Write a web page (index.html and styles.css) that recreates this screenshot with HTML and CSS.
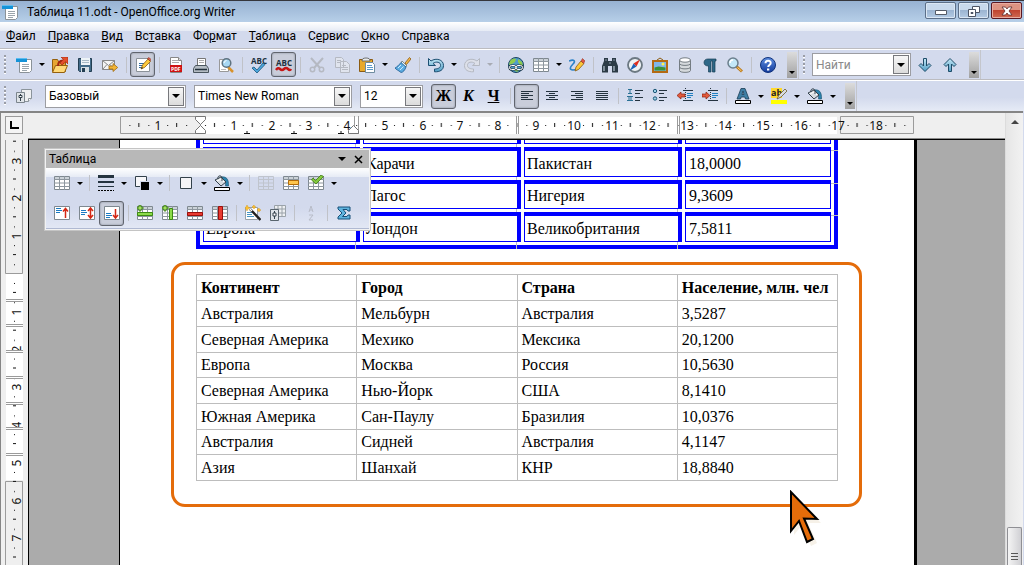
FILE: index.html
```html
<!DOCTYPE html>
<html lang="ru">
<head>
<meta charset="utf-8">
<title>Таблица 11.odt - OpenOffice.org Writer</title>
<link rel="stylesheet" href="styles.css">
</head>
<body>
<svg class="sprite" aria-hidden="true">
  <defs>
    <linearGradient id="g-blue" x1="0" y1="0" x2="0" y2="1"><stop offset="0" stop-color="#c5e8f6"/><stop offset="1" stop-color="#4f9cc4"/></linearGradient>
    <linearGradient id="g-help" x1="0" y1="0" x2="0" y2="1"><stop offset="0" stop-color="#5f8fe0"/><stop offset="1" stop-color="#123a9c"/></linearGradient>
  </defs>
  <symbol id="i-new" viewBox="0 0 16 16"><path d="M3.500 2.500h12v11l-2 2h-10z" fill="#fff" stroke="#8a9298"/><path d="M0 1h11v4H0z" fill="#1593d8"/><path d="M0 1h11v1H0z" fill="#5bbcf0"/><path d="M6 7.500h7M6 9.500h7M6 11.500h7M6 13.500h5" stroke="#9aa4ac"/></symbol>
  <symbol id="i-open" viewBox="0 0 16 16"><path d="M.5 14.500V2.500h5l1 2h7v10z" fill="#e7a633" stroke="#94600e"/><path d="M.5 15.500l3-7h12l-3 7z" fill="#ffd978" stroke="#94600e"/><path d="M6 9c0-4 2-5.500 5-5.500V6l-1 0" fill="none" stroke="#a32813" stroke-width="2"/><path d="M9 0h7v7l-2.300-2.200L10 8 8 6l3.300-3.600z" fill="#e2502c" stroke="#a32813" stroke-width=".7"/></symbol>
  <symbol id="i-save" viewBox="0 0 16 16"><path d="M1.500 1.500h13v13h-12l-1-1z" fill="#426b88" stroke="#233e52"/><path d="M4 1h9v7H4z" fill="#eef4f8"/><path d="M5 3.500h7M5 5.500h7" stroke="#a8bac6"/><path d="M4 10h8v5H4z" fill="#d4dde4"/><path d="M5 11h3v4H5z" fill="#233e52"/></symbol>
  <symbol id="i-mail" viewBox="0 0 16 16"><path d="M.5 3.500h12v9H.5z" fill="#f5f5f5" stroke="#888"/><path d="M.5 3.500l6 5 6-5M.5 12.500l4.500-5M12.500 12.500L8 7.500" fill="none" stroke="#888"/><path d="M7 9h4V6.500l4.700 4-4.700 4V12H7z" fill="#f2b535" stroke="#a06a10" stroke-width=".8"/></symbol>
  <symbol id="i-edit" viewBox="0 0 16 16"><path d="M1.500 1.500h13v13h-13z" fill="#fff" stroke="#8b9299"/><path d="M4 6.500h5M4 8.500h4M4 10.500h3" stroke="#2f6aa0"/><path d="M6 12l1.500-4L13 2l2.500 2.500-6 6z" fill="#fbc83a" stroke="#8c5c12" stroke-width=".8"/><path d="M12.500 1.500L14 .500 16 2.500 15 4z" fill="#e0604c" stroke="#8c2d1c" stroke-width=".6"/><path d="M6 12l1-2 1 1z" fill="#222"/></symbol>
  <symbol id="i-print" viewBox="0 0 16 16"><path d="M4.500 1.500h8v7h-8z" fill="#fff" stroke="#777"/><path d="M6 3.500h5M6 5.500h5" stroke="#aaa"/><path d="M2.500 8.500h11l2 3v4H.500v-4z" fill="#b4bcc3" stroke="#4a565f"/><path d="M2 12.500h12" stroke="#23313c" stroke-width="1.500"/></symbol>
  <symbol id="i-preview" viewBox="0 0 16 16"><path d="M1.500 2.500h9v12h-9z" fill="#fff" stroke="#999"/><path d="M3 12.500h5" stroke="#bbb"/><path d="M10 10l5 5" stroke="#d8922c" stroke-width="2.500"/><circle cx="8.500" cy="6" r="4.300" fill="#a8d8f2" stroke="#5f7380" stroke-width="1.500"/><path d="M6 6a3 3 0 0 1 2.500-2.500" stroke="#fff" fill="none"/></symbol>
  <symbol id="i-cut" viewBox="0 0 16 16"><path d="M2 1l9 10M14 1L5 11" stroke="#b5b9c2" stroke-width="2"/><circle cx="3.500" cy="12.500" r="2.200" fill="none" stroke="#b5b9c2" stroke-width="1.500"/><circle cx="12.500" cy="12.500" r="2.200" fill="none" stroke="#b5b9c2" stroke-width="1.500"/></symbol>
  <symbol id="i-copy" viewBox="0 0 16 16"><path d="M1.500.500h6l2 2v8h-8zM6.500 4.500h6l3 3v8h-9z" fill="#e0e4ee" stroke="#b5b9c2"/><path d="M3 3.500h4M3 5.500h3M8 8.500h4M8 10.500h6M8 12.500h6" stroke="#b5b9c2"/></symbol>
  <symbol id="i-paste" viewBox="0 0 16 16"><path d="M.500 2.500h13v12h-13z" fill="#e8a92c" stroke="#8c5c12"/><path d="M3 4c0-2 1-3 4-3s4 1 4 3z" fill="#e7eaec" stroke="#555" stroke-width=".8"/><path d="M6.500 5.500h7l2 2v8h-9z" fill="#fff" stroke="#6f8ca0"/><path d="M8 8.500h5M8 10.500h6M8 12.500h6" stroke="#5a9acb"/></symbol>
  <symbol id="i-brush" viewBox="0 0 16 16"><path d="M10 6l4.500-5.500L16 2l-4.500 5.500z" fill="#f3b548" stroke="#8c5c12" stroke-width=".8"/><path d="M7 4l5 5-2 1-4-4z" fill="#f2f5f7" stroke="#566" stroke-width=".7"/><path d="M6 5.500L11 10c-1 3-3 5.500-5 5.500C3 13 1.500 13 0 11c2-1 4-3 6-5.500z" fill="#5cabe0" stroke="#1d5c92" stroke-width=".8"/><path d="M3 11l3-3M5 13l3.500-3.500" stroke="#cdeafb"/></symbol>
  <symbol id="i-undo" viewBox="0 0 16 16"><path d="M.500 1.500v7h7L5 6.500C8 4 13 5 12.500 8.500c0 2.500-3 3.500-6 3.500v2.800C12 15 15.500 13 15.500 8.500 15.500 2.500 8 .500 3 4z" fill="url(#g-blue)" stroke="#1d4f72"/></symbol>
  <symbol id="i-redo" viewBox="0 0 16 16"><path d="M15.500 1.500v7h-7L11 6.500C8 4 3 5 3.500 8.500c0 2.500 3 3.500 6 3.500v2.800C4 15 .500 13 .500 8.500.500 2.500 8 .500 13 4z" fill="#dde0e9" stroke="#b5b9c2"/></symbol>
  <symbol id="i-link" viewBox="0 0 16 16"><circle cx="8" cy="8" r="7.500" fill="#4f9ccc" stroke="#1c4460"/><path d="M2 4c2-3 5-3 6-2L7 5 4 7 1 8zM10 2l4 3 1 4-3-1-2-3zM4 12l5-1 2 2-2 2z" fill="#8fcb4f"/><rect x="1.500" y="8.500" width="6.500" height="4" rx="2" fill="none" stroke="#20313f" stroke-width="2.200"/><rect x="8" y="8.500" width="6.500" height="4" rx="2" fill="none" stroke="#20313f" stroke-width="2.200"/><rect x="1.500" y="8.500" width="6.500" height="4" rx="2" fill="none" stroke="#fff"/><rect x="8" y="8.500" width="6.500" height="4" rx="2" fill="none" stroke="#fff"/></symbol>
  <symbol id="i-grid" viewBox="0 0 16 16"><path d="M.500 1.500h15v13H.500z" fill="#fff" stroke="#7e8890"/><path d="M1 2h14v2H1z" fill="#cbd2d8"/><path d="M0 4.500h16M0 8h16M0 11.500h16M5.500 1v14M10.500 1v14" stroke="#8d969e" fill="none"/></symbol>
  <symbol id="i-griddim" viewBox="0 0 16 16"><path d="M.500 1.500h15v13H.500zM0 4.500h16M0 8h16M0 11.500h16M5.500 1v14M10.500 1v14" stroke="#bfc4cd" fill="none"/></symbol>
  <symbol id="i-draw" viewBox="0 0 16 16"><path d="M0 4c5-2 7 0 4 3s-4 6 0 6 6-2 6-2" fill="none" stroke="#2b82c8" stroke-width="1.600"/><path d="M6 14l1-4 5-6 3 2.500-5.500 6z" fill="#fbc83a" stroke="#8c5c12" stroke-width=".8"/><path d="M12 4l1.500-2.500L16 4l-1.500 2.500z" fill="#dd5644" stroke="#8c2d1c" stroke-width=".5"/></symbol>
  <symbol id="i-find" viewBox="0 0 16 16"><path d="M2 1h4v3h4V1h4v3l2 5v6.500h-6V9H6v6.500H0V9l2-5z" fill="#2c3b46"/><path d="M2 9v5M12 9v5" stroke="#9aabb6" stroke-width="1.500"/><path d="M3 3h2M11 3h2M7 6h2" stroke="#8596a3"/></symbol>
  <symbol id="i-nav" viewBox="0 0 16 16"><circle cx="8" cy="8" r="7" fill="#eef3f6" stroke="#6c7982" stroke-width="1.800"/><path d="M13 2.500L9.500 9.500 6.500 6.500z" fill="#df2f20"/><path d="M3 13.500l3.500-7 3 3z" fill="#1c63b8"/></symbol>
  <symbol id="i-pic" viewBox="0 0 16 16"><path d="M5 3l3-2 3 2" fill="none" stroke="#8c5c12"/><path d="M1 4h14v11H1z" fill="#80b6e8" stroke="#b46a12" stroke-width="2"/><path d="M2.500 13.500v-3l4-1 7 1v3z" fill="#3b9136"/><circle cx="11" cy="7" r="1.500" fill="#fff34f"/></symbol>
  <symbol id="i-db" viewBox="0 0 16 16"><path d="M2.500 3v10.500c0 2.500 11 2.500 11 0V3" fill="#d5d9dc" stroke="#747c82"/><ellipse cx="8" cy="3" rx="5.500" ry="2.200" fill="#fff" stroke="#747c82"/><path d="M2.500 6.500c0 2.500 11 2.500 11 0M2.500 10c0 2.500 11 2.500 11 0" fill="none" stroke="#747c82"/></symbol>
  <symbol id="i-para" viewBox="0 0 16 16"><path d="M2 5.500C2 3 4 2 6 2h8v2h-1v11h-2.500V4H9v11H6.500V9C4 9 2 8 2 5.500z" fill="#2d6787" stroke="#163c54" stroke-width=".7"/></symbol>
  <symbol id="i-zoom" viewBox="0 0 16 16"><path d="M9.500 9.500l5.500 5" stroke="#bb7a20" stroke-width="3"/><path d="M10.500 10.500l4 3.500" stroke="#ffd978"/><circle cx="6" cy="6" r="5" fill="#c4e8f8" stroke="#6c7f8c" stroke-width="1.500"/><path d="M3 6a3 3 0 0 1 3-3" stroke="#fff" fill="none" stroke-width="1.500"/></symbol>
  <symbol id="i-help" viewBox="0 0 16 16"><circle cx="8" cy="8" r="7.500" fill="url(#g-help)" stroke="#10327c"/><path d="M5.500 6.200C5.500 3 10.700 3 10.700 6c0 2-2.500 2-2.500 4" fill="none" stroke="#fff" stroke-width="2"/><path d="M7 11.500h2.300v2H7z" fill="#fff"/></symbol>
  <symbol id="i-down" viewBox="0 0 16 16"><path d="M6.500 1.500h3v7.500l2.500-2.500 2 2-6 6-6-6 2-2L6.500 9z" fill="url(#g-blue)" stroke="#1e4c68"/></symbol>
  <symbol id="i-up" viewBox="0 0 16 16"><path d="M6.500 14.500h3V7L12 9.500l2-2-6-6-6 6 2 2L6.500 7z" fill="url(#g-blue)" stroke="#1e4c68"/></symbol>
  <symbol id="i-styles" viewBox="0 0 16 16"><path d="M5.500 1.500h10v9l-3 3h-7z" fill="#eef0f2" stroke="#8b949b"/><path d="M12.500 13.500v-3h3" fill="#fff" stroke="#8b949b"/><path d="M.500 4.500h8v10h-8z" fill="#dfe4e8" stroke="#7b858d"/><path d="M4.500 6v7" stroke="#33414b"/><path d="M3 7.500h3v2H3z" fill="#fff" stroke="#33414b"/></symbol>
  <symbol id="i-left" viewBox="0 0 16 16"><path d="M2 3.500h12M2 5.500h8M2 7.500h12M2 9.500h7M2 11.500h12" stroke="#24333f"/></symbol>
  <symbol id="i-center" viewBox="0 0 16 16"><path d="M2 3.500h12M5 5.500h6M2 7.500h12M5 9.500h6M2 11.500h12" stroke="#24333f"/></symbol>
  <symbol id="i-right" viewBox="0 0 16 16"><path d="M2 3.500h12M6 5.500h8M2 7.500h12M7 9.500h7M2 11.500h12" stroke="#24333f"/></symbol>
  <symbol id="i-just" viewBox="0 0 16 16"><path d="M2 3.500h12M2 5.500h12M2 7.500h12M2 9.500h12M2 11.500h12" stroke="#24333f"/></symbol>
  <symbol id="i-num" viewBox="0 0 16 16"><path d="M1 1.500h4M3 1v5M1 5.500h4M0 8.500h6M0 12.500h6M2 8v5M4 8v5" stroke="#2a7194"/><path d="M8 2.500h8M8 5.500h5M8 9.500h8M8 12.500h5" stroke="#24333f"/></symbol>
  <symbol id="i-bul" viewBox="0 0 16 16"><circle cx="3" cy="3" r="1.700" fill="#9bd0e8" stroke="#1c5777"/><circle cx="3" cy="10.500" r="1.700" fill="#9bd0e8" stroke="#1c5777"/><path d="M7 2.500h8M7 5.500h5M7 9.500h8M7 12.500h5" stroke="#24333f"/></symbol>
  <symbol id="i-outdent" viewBox="0 0 16 16"><path d="M8.500 0v14" stroke="#24333f" stroke-dasharray="1 1"/><path d="M6 2.500h10M6 12.500h10" stroke="#24333f"/><path d="M10 5.500h6M10 7.500h6M10 9.500h4" stroke="#1f7fc0"/><path d="M0 7.500l4-3.500v2h4v3H4v2z" fill="#e25a3c" stroke="#8c1f10" stroke-width=".7"/></symbol>
  <symbol id="i-indent" viewBox="0 0 16 16"><path d="M8.500 0v14" stroke="#24333f" stroke-dasharray="1 1"/><path d="M6 2.500h10M6 12.500h10" stroke="#24333f"/><path d="M10 5.500h6M10 7.500h6M10 9.500h4" stroke="#1f7fc0"/><path d="M8 7.500L4 4v2H0v3h4v2z" fill="#e25a3c" stroke="#8c1f10" stroke-width=".7"/></symbol>
  <symbol id="i-color" viewBox="0 0 16 16"><path d="M2 11L6 .500h4L14 11h-3.500l-.7-2H6.200l-.700 2zM7 6.500h2L8 3z" fill="#3f7fa5" stroke="#1a3d55" stroke-width=".8" fill-rule="evenodd"/><path d="M.500 12.500h15v3H.500z" fill="#fff" stroke="#000"/></symbol>
  <symbol id="i-fill" viewBox="0 0 16 16"><path d="M7 2c5-1 8 2 7.500 9h-3C12 8 11 6 9 4z" fill="#2b82ac" stroke="#1c506c" stroke-width=".6"/><path d="M1 5l6-3 5 5-5 4z" fill="#d7dce0" stroke="#33414b"/><path d="M3 6l4-2 3 3" fill="none" stroke="#fff"/><path d="M4 4c-1-4 4-4 4-1l0 3" fill="none" stroke="#33414b"/><path d="M.500 12.500h15v3H.500z" fill="#fff" stroke="#000"/></symbol>
  <symbol id="i-lines" viewBox="0 0 16 16"><path d="M0 1.500h16" stroke="#24333f" stroke-width="3"/><path d="M0 7h16" stroke="#24333f" stroke-width="2"/><path d="M0 11.500h16" stroke="#24333f"/><path d="M0 15.500h16" stroke="#000" stroke-dasharray="2 1"/></symbol>
  <symbol id="i-lcolor" viewBox="0 0 16 16"><path d="M1.500 1.500h11v10h-11z" fill="#f7f7f9" stroke="#33414b"/><path d="M6 6h10v10H6z" fill="#d3daed"/><path d="M7 7h8v8H7z" fill="#000"/></symbol>
  <symbol id="i-box" viewBox="0 0 16 16"><path d="M2.500 2.500h11v11h-11z" fill="#f4f4f7" stroke="#33414b"/></symbol>
  <symbol id="i-merge" viewBox="0 0 16 16"><use href="#i-grid"/><path d="M5.500 5.500h10v4h-10z" fill="#ffc64d" stroke="#b36c09"/></symbol>
  <symbol id="i-opt" viewBox="0 0 16 16"><use href="#i-grid"/><path d="M5 3l2.500 2.500L13 0l2.500 1.500L8 9 3.500 5z" fill="#84c83e" stroke="#3d7a13" stroke-width=".8"/></symbol>
  <symbol id="i-top" viewBox="0 0 16 16"><path d="M.500 1.500h15v13H.500z" fill="#fff" stroke="#7e8890"/><path d="M2 3.500h5M2 5.500h6M2 7.500h4" stroke="#1b7ac2"/><path d="M11.500 4v9M9 6.500l2.500-3 2.500 3" stroke="#d32613" fill="none" stroke-width="1.500"/></symbol>
  <symbol id="i-mid" viewBox="0 0 16 16"><path d="M.500 1.500h15v13H.500z" fill="#fff" stroke="#7e8890"/><path d="M2 5.500h5M2 7.500h6M2 9.500h4" stroke="#1b7ac2"/><path d="M11.500 3.500v9M9 6l2.500-3L14 6M9 10l2.500 3 2.500-3" stroke="#d32613" fill="none" stroke-width="1.500"/></symbol>
  <symbol id="i-bot" viewBox="0 0 16 16"><path d="M.500 1.500h15v13H.500z" fill="#fff" stroke="#7e8890"/><path d="M2 8.500h5M2 10.500h6M2 12.500h4" stroke="#1b7ac2"/><path d="M11.500 4v9M9 10l2.500 3 2.500-3" stroke="#d32613" fill="none" stroke-width="1.500"/></symbol>
  <symbol id="i-addrow" viewBox="0 0 16 16"><use href="#i-grid"/><path d="M.500 7.500h15v3H.500z" fill="#8cdb4a" stroke="#3d8a13"/><path d="M2 0h2v2h2v2H4v2H2V4H0V2h2z" fill="#a4e060" stroke="#2f6e10" stroke-width=".8"/></symbol>
  <symbol id="i-addcol" viewBox="0 0 16 16"><use href="#i-grid"/><path d="M7.500 3.500h3v11h-3z" fill="#8cdb4a" stroke="#3d8a13"/><path d="M2 0h2v2h2v2H4v2H2V4H0V2h2z" fill="#a4e060" stroke="#2f6e10" stroke-width=".8"/></symbol>
  <symbol id="i-delrow" viewBox="0 0 16 16"><use href="#i-grid"/><path d="M.500 7.500h15v3H.500z" fill="#e83a30" stroke="#9c0e0a"/></symbol>
  <symbol id="i-delcol" viewBox="0 0 16 16"><use href="#i-grid"/><path d="M6.500 1.500h4v13h-4z" fill="#e83a30" stroke="#9c0e0a"/></symbol>
  <symbol id="i-wand" viewBox="0 0 16 16"><path d="M.500 2.500h12v12H.500z" fill="#fff" stroke="#98a1a8"/><path d="M2 7.500h5M2 9.500h5M2 11.500h7" stroke="#4494c4"/><path d="M5 4l10.500 11" stroke="#222" stroke-width="2.500"/><path d="M5 4l2 2" stroke="#fff" stroke-width="1.500"/><path d="M2 0l1 2 2 1-2 1-1 2-1-2-1-1 1-1zM9 0l.7 1.500L11 2l-1.300.7L9 4l-.7-1.300L7 2zM14 3l.7 1.500L16 5l-1.300.7L14 7l-.7-1.300L12 5z" fill="#ffc22b" stroke="#d08e12" stroke-width=".4"/></symbol>
  <symbol id="i-prop" viewBox="0 0 16 16"><path d="M4.500.500h11v11h-11zM4 4h12M4 8h12M8 0v12M12 0v12" fill="#eef0f2" stroke="#9aa2a9"/><path d="M.500 4.500h8v11h-8z" fill="#dfe4e8" stroke="#59656e"/><path d="M4.500 6v8" stroke="#33414b"/><path d="M3 8h3v3H3z" fill="#fff" stroke="#33414b"/></symbol>
  <symbol id="i-sort" viewBox="0 0 16 16"><path d="M6 7l2-6 2 6M6.500 5h3M6 10h4l-4 5h4" fill="none" stroke="#b8bcc8"/></symbol>
  <symbol id="i-sum" viewBox="0 0 16 16"><path d="M2 2h12v4h-2l-1-1.500H7L10 8l-3.500 3.500H11l1-1.500h2v4H2v-2l4-4-4-4z" fill="#5fb4df" stroke="#164f78"/></symbol>
</svg>

<header class="titlebar">
  <svg class="icon"><use href="#i-new"/></svg>
  <h1 class="title">Таблица 11.odt - OpenOffice.org Writer</h1>
  <div class="win-buttons">
    <button class="win" aria-label="Свернуть"><svg viewBox="0 0 14 14"><path d="M1.500 6.500h11v4h-11z" fill="#fff" stroke="#555b66"/></svg></button>
    <button class="win" aria-label="Восстановить"><svg viewBox="0 0 14 14"><path d="M5.500 2.500h7v6h-7z" fill="#fff" stroke="#4c5464"/><path d="M1.500 5.500h7v7h-7z" fill="#fff" stroke="#4c5464"/><path d="M4 8.500h2v1H4z" fill="none" stroke="#4c5464"/></svg></button>
    <button class="win win-close" aria-label="Закрыть"><svg viewBox="0 0 14 14"><path d="M2 3h3.500L7 5l1.500-2H12L9 7l3 4H8.500L7 9l-1.500 2H2l3-4z" fill="#fff" stroke="#5c2a2a" stroke-width=".8"/></svg></button>
  </div>
</header>

<nav class="menubar">
  <a href="#"><u>Ф</u>айл</a><a href="#"><u>П</u>равка</a><a href="#"><u>В</u>ид</a><a href="#">Вс<u>т</u>авка</a><a href="#">Фо<u>р</u>мат</a><a href="#"><u>Т</u>аблица</a><a href="#">С<u>е</u>рвис</a><a href="#"><u>О</u>кно</a><a href="#">Спр<u>а</u>вка</a>
</nav>

<div class="toolbar-row">
  <div class="toolbar" role="toolbar" aria-label="Стандартная">
    <i class="grip"></i>
    <button class="tb" aria-label="Создать"><svg class="icon"><use href="#i-new"/></svg></button><button class="drop" aria-label="Варианты создания"></button>
    <button class="tb" aria-label="Открыть"><svg class="icon"><use href="#i-open"/></svg></button>
    <button class="tb" aria-label="Сохранить"><svg class="icon"><use href="#i-save"/></svg></button>
    <button class="tb" aria-label="Отправить"><svg class="icon"><use href="#i-mail"/></svg></button>
    <i class="sep"></i>
    <button class="tb on" aria-label="Правка файла"><svg class="icon"><use href="#i-edit"/></svg></button>
    <i class="sep"></i>
    <button class="tb" aria-label="Экспорт в PDF"><svg class="icon" viewBox="0 0 16 16"><path d="M2.500.500h8l3 3v12h-11z" fill="#fff" stroke="#888"/><path d="M4 3.500h6M4 5.500h7" stroke="#aaa"/><path d="M10.500.500v3h3" fill="#ddd" stroke="#888"/><path d="M2 8h12v7H2z" fill="#cf1313"/><text x="3" y="14" font-size="5" fill="#fff" class="tiny">PDF</text></svg></button>
    <button class="tb" aria-label="Печать"><svg class="icon"><use href="#i-print"/></svg></button>
    <button class="tb" aria-label="Предварительный просмотр"><svg class="icon"><use href="#i-preview"/></svg></button>
    <i class="sep"></i>
    <button class="tb" aria-label="Проверка орфографии"><svg class="icon wide" viewBox="0 0 18 16"><text x="1" y="7" font-size="8" fill="#20313f" class="tiny">ABC</text><path d="M4 10l3 3 6-7 2 1.500-8 8.500-5-5z" fill="#4ca6dc" stroke="#1b567c" stroke-width=".8"/></svg></button>
    <button class="tb on" aria-label="Автопроверка"><svg class="icon wide" viewBox="0 0 18 16"><text x="1" y="9" font-size="8" fill="#20313f" class="tiny">ABC</text><path d="M1 13q2-3 4-1t4 0 4 0 3 0" fill="none" stroke="#c51515" stroke-width="2.500"/></svg></button>
    <i class="sep"></i>
    <button class="tb" aria-label="Вырезать"><svg class="icon"><use href="#i-cut"/></svg></button>
    <button class="tb" aria-label="Копировать"><svg class="icon"><use href="#i-copy"/></svg></button>
    <button class="tb" aria-label="Вставить"><svg class="icon"><use href="#i-paste"/></svg></button><button class="drop" aria-label="Варианты вставки"></button>
    <button class="tb" aria-label="Копировать формат"><svg class="icon"><use href="#i-brush"/></svg></button>
    <i class="sep"></i>
    <button class="tb" aria-label="Отменить"><svg class="icon"><use href="#i-undo"/></svg></button><button class="drop" aria-label="Список отмены"></button>
    <button class="tb" aria-label="Вернуть"><svg class="icon"><use href="#i-redo"/></svg></button><button class="drop dim" aria-label="Список возврата"></button>
    <i class="sep"></i>
    <button class="tb" aria-label="Гиперссылка"><svg class="icon"><use href="#i-link"/></svg></button>
    <button class="tb" aria-label="Таблица"><svg class="icon"><use href="#i-grid"/></svg></button><button class="drop" aria-label="Размер таблицы"></button>
    <button class="tb" aria-label="Рисование"><svg class="icon"><use href="#i-draw"/></svg></button>
    <i class="sep"></i>
    <button class="tb" aria-label="Найти и заменить"><svg class="icon"><use href="#i-find"/></svg></button>
    <button class="tb" aria-label="Навигатор"><svg class="icon"><use href="#i-nav"/></svg></button>
    <button class="tb" aria-label="Галерея"><svg class="icon"><use href="#i-pic"/></svg></button>
    <button class="tb" aria-label="Источники данных"><svg class="icon"><use href="#i-db"/></svg></button>
    <button class="tb" aria-label="Непечатаемые символы"><svg class="icon"><use href="#i-para"/></svg></button>
    <button class="tb" aria-label="Масштаб"><svg class="icon"><use href="#i-zoom"/></svg></button>
    <i class="sep"></i>
    <button class="tb" aria-label="Справка"><svg class="icon"><use href="#i-help"/></svg></button>
    <button class="more" aria-label="Настройка панели"></button>
  </div>
  <div class="toolbar" role="toolbar" aria-label="Поиск">
    <i class="grip"></i>
    <div class="combo find"><input type="text" placeholder="Найти" aria-label="Найти"><button class="combo-btn" aria-label="История поиска"></button></div>
    <button class="tb" aria-label="Найти далее"><svg class="icon"><use href="#i-down"/></svg></button>
    <button class="tb" aria-label="Найти ранее"><svg class="icon"><use href="#i-up"/></svg></button>
    <button class="more" aria-label="Настройка поиска"></button>
  </div>
</div>

<div class="toolbar-row format-row">
  <div class="toolbar" role="toolbar" aria-label="Форматирование">
    <i class="grip"></i>
    <button class="tb" aria-label="Стили"><svg class="icon"><use href="#i-styles"/></svg></button>
    <div class="combo style"><select aria-label="Стиль"><option>Базовый</option></select><span class="combo-btn"></span></div>
    <div class="combo face"><select aria-label="Шрифт"><option>Times New Roman</option></select><span class="combo-btn"></span></div>
    <div class="combo size"><select aria-label="Кегль"><option>12</option></select><span class="combo-btn"></span></div>
    <button class="tb on letter" aria-label="Жирный">Ж</button>
    <button class="tb letter italic" aria-label="Курсив">К</button>
    <button class="tb letter under" aria-label="Подчёркнутый">Ч</button>
    <i class="sep"></i>
    <button class="tb on" aria-label="По левому краю"><svg class="icon"><use href="#i-left"/></svg></button>
    <button class="tb" aria-label="По центру"><svg class="icon"><use href="#i-center"/></svg></button>
    <button class="tb" aria-label="По правому краю"><svg class="icon"><use href="#i-right"/></svg></button>
    <button class="tb" aria-label="По ширине"><svg class="icon"><use href="#i-just"/></svg></button>
    <i class="sep"></i>
    <button class="tb" aria-label="Нумерация"><svg class="icon"><use href="#i-num"/></svg></button>
    <button class="tb" aria-label="Маркеры"><svg class="icon"><use href="#i-bul"/></svg></button>
    <button class="tb" aria-label="Уменьшить отступ"><svg class="icon"><use href="#i-outdent"/></svg></button>
    <button class="tb" aria-label="Увеличить отступ"><svg class="icon"><use href="#i-indent"/></svg></button>
    <i class="sep"></i>
    <button class="tb" aria-label="Цвет шрифта"><svg class="icon"><use href="#i-color"/></svg></button><button class="drop" aria-label="Выбор цвета шрифта"></button>
    <button class="tb" aria-label="Выделение цветом"><svg class="icon" viewBox="0 0 16 16"><path d="M0 0h11v10H0z" fill="#ffd92e"/><text x="0" y="8" font-size="9" fill="#222" class="tiny">ab</text><path d="M6 11l2-4 6-6 2 2-6 6z" fill="#d8dde0" stroke="#6c5a28" stroke-width=".8"/><path d="M0 12h16v4H0z" fill="#ff0"/></svg></button><button class="drop" aria-label="Выбор цвета выделения"></button>
    <button class="tb" aria-label="Цвет фона"><svg class="icon"><use href="#i-fill"/></svg></button><button class="drop" aria-label="Выбор цвета фона"></button>
    <button class="more" aria-label="Настройка панели"></button>
  </div>
</div>

<main class="workspace">
  <div class="corner"><button class="tab-kind" aria-label="Тип табуляции"></button></div>
  <svg class="hruler" aria-hidden="true">
    <defs>
      <pattern id="hticks" x="196" y="116" width="37.800" height="18" patternUnits="userSpaceOnUse"><path d="M9 9h1v1H9zM28 9h1v1h-1zM18 7h1v4h-1z" fill="#111"/></pattern>
    </defs>
    <g transform="translate(-28 -113)">
      <path d="M201 117h636v17H201z" fill="#fff"/>
      <path d="M120.500 116.500h80v17h-80zM840.500 116.500h73v17h-73z" fill="#efefef" stroke="#9b9b9b"/>
      <path d="M126 116h784v18H126z" fill="url(#hticks)"/>
      <g class="ruler-num">
        <text x="158" y="130">1</text><text x="234" y="130">1</text><text x="272" y="130">2</text><text x="309" y="130">3</text><text x="347" y="130">4</text><text x="385" y="130">5</text><text x="423" y="130">6</text><text x="460" y="130">7</text><text x="498" y="130">8</text><text x="536" y="130">9</text><text x="574" y="130">10</text><text x="612" y="130">11</text><text x="649" y="130">12</text><text x="687" y="130">13</text><text x="725" y="130">14</text><text x="763" y="130">15</text><text x="801" y="130">16</text><text x="838" y="130">17</text><text x="876" y="130">18</text>
      </g>
      <path d="M354.500 116v18M358.500 116v18M516.500 116v18M518.500 116v18M677.500 116v18M679.500 116v18" stroke="#9b9b9b"/>
      <path d="M244 133.500h6M247 131v3M291 133.500h6M294 131v3M338 133.500h6M341 131v3" stroke="#111"/>
      <path d="M195.500 116.500h10v3l-5 5-5-5zM195.500 133.500h10v-3l-5-5-5 5zM348.500 133.500h10v-3l-5-5-5 5z" fill="#fff" stroke="#777"/>
    </g>
  </svg>
  <svg class="vruler" aria-hidden="true">
    <defs>
      <pattern id="vticks" x="0" y="274" width="18" height="37.800" patternUnits="userSpaceOnUse"><path d="M9 9h1v1H9zM9 28h1v1H9zM8 18h3v1H8z" fill="#111"/></pattern>
    </defs>
    <g transform="translate(0 -140)">
      <path d="M1 274h17v206H1z" fill="#fff"/>
      <path d="M.500 139v134.500h17V139M.500 700V481.500h17V700" fill="#efefef" stroke="#9b9b9b"/>
      <path d="M0 140h18v560H0z" fill="url(#vticks)"/>
      <g class="ruler-num">
        <text transform="translate(16 161) rotate(-90)">3</text><text transform="translate(16 198) rotate(-90)">2</text><text transform="translate(16 236) rotate(-90)">1</text><text transform="translate(16 312) rotate(-90)">1</text><text transform="translate(16 349) rotate(-90)">2</text><text transform="translate(16 387) rotate(-90)">3</text><text transform="translate(16 425) rotate(-90)">4</text><text transform="translate(16 463) rotate(-90)">5</text><text transform="translate(16 501) rotate(-90)">6</text><text transform="translate(16 538) rotate(-90)">7</text>
      </g>
      <path d="M1 300.500h17M1 325.500h17M1 351.500h17M1 377.500h17M1 403.500h17M1 428.500h17M1 454.500h17" stroke="#9b9b9b" stroke-width="3"/>
      <path d="M1 300.500h17M1 325.500h17M1 351.500h17M1 377.500h17M1 403.500h17M1 428.500h17M1 454.500h17" stroke="#fff"/>
    </g>
  </svg>

  <div class="canvas">
    <article class="page">
      <table class="ringed">
        <colgroup><col class="c1"><col class="c2"><col class="c2"><col class="c3"></colgroup>
        <tbody>
          <tr><td></td><td></td><td></td><td></td></tr>
          <tr><td></td><td>Карачи</td><td>Пакистан</td><td>18,0000</td></tr>
          <tr><td></td><td>Лагос</td><td>Нигерия</td><td>9,3609</td></tr>
          <tr><td>Европа</td><td>Лондон</td><td>Великобритания</td><td>7,5811</td></tr>
        </tbody>
      </table>
      <section class="callout">
        <table class="plain">
          <thead><tr><th>Континент</th><th>Город</th><th>Страна</th><th>Население, млн. чел</th></tr></thead>
          <tbody>
            <tr><td>Австралия</td><td>Мельбурн</td><td>Австралия</td><td>3,5287</td></tr>
            <tr><td>Северная Америка</td><td>Мехико</td><td>Мексика</td><td>20,1200</td></tr>
            <tr><td>Европа</td><td>Москва</td><td>Россия</td><td>10,5630</td></tr>
            <tr><td>Северная Америка</td><td>Нью-Йорк</td><td>США</td><td>8,1410</td></tr>
            <tr><td>Южная Америка</td><td>Сан-Паулу</td><td>Бразилия</td><td>10,0376</td></tr>
            <tr><td>Австралия</td><td>Сидней</td><td>Австралия</td><td>4,1147</td></tr>
            <tr><td>Азия</td><td>Шанхай</td><td>КНР</td><td>18,8840</td></tr>
          </tbody>
        </table>
        <svg class="pointer" viewBox="0 0 34 58" aria-hidden="true">
          <path d="M5 5v40l8-10 9 21 6-3-9-20h13z" fill="#f6f1e8"/>
          <path d="M2 2v39l8-10 8 21 6-3-9-20.500 13 .500z" fill="#e46c0a" stroke="#000" stroke-width="2"/>
        </svg>
      </section>
    </article>

    <aside class="palette" aria-label="Таблица">
      <div class="palette-head"><span class="palette-title">Таблица</span><button class="drop" aria-label="Меню панели"></button><button class="close" aria-label="Закрыть панель"><svg viewBox="0 0 9 9"><path d="M1 1l7 7M8 1L1 8" stroke="#000" stroke-width="1.500"/></svg></button></div>
      <div class="palette-body">
        <div class="palette-row">
          <button class="tb" aria-label="Вставить таблицу"><svg class="icon"><use href="#i-grid"/></svg></button><button class="drop" aria-label="Размер"></button>
          <i class="sep"></i>
          <button class="tb" aria-label="Стиль линии"><svg class="icon"><use href="#i-lines"/></svg></button><button class="drop" aria-label="Выбор стиля линии"></button>
          <button class="tb" aria-label="Цвет линии"><svg class="icon"><use href="#i-lcolor"/></svg></button><button class="drop" aria-label="Выбор цвета линии"></button>
          <i class="sep"></i>
          <button class="tb" aria-label="Обрамление"><svg class="icon"><use href="#i-box"/></svg></button><button class="drop" aria-label="Выбор обрамления"></button>
          <button class="tb" aria-label="Цвет фона ячейки"><svg class="icon"><use href="#i-fill"/></svg></button><button class="drop" aria-label="Выбор цвета фона ячейки"></button>
          <i class="sep"></i>
          <button class="tb" aria-label="Объединить ячейки"><svg class="icon"><use href="#i-griddim"/></svg></button>
          <button class="tb" aria-label="Разбить ячейки"><svg class="icon"><use href="#i-merge"/></svg></button>
          <button class="tb" aria-label="Оптимизировать"><svg class="icon"><use href="#i-opt"/></svg></button><button class="drop" aria-label="Варианты оптимизации"></button>
        </div>
        <div class="palette-row">
          <button class="tb" aria-label="Сверху"><svg class="icon"><use href="#i-top"/></svg></button>
          <button class="tb" aria-label="По центру ячейки"><svg class="icon"><use href="#i-mid"/></svg></button>
          <button class="tb on" aria-label="Снизу"><svg class="icon"><use href="#i-bot"/></svg></button>
          <i class="sep"></i>
          <button class="tb" aria-label="Вставить строку"><svg class="icon"><use href="#i-addrow"/></svg></button>
          <button class="tb" aria-label="Вставить столбец"><svg class="icon"><use href="#i-addcol"/></svg></button>
          <button class="tb" aria-label="Удалить строку"><svg class="icon"><use href="#i-delrow"/></svg></button>
          <button class="tb" aria-label="Удалить столбец"><svg class="icon"><use href="#i-delcol"/></svg></button>
          <i class="sep"></i>
          <button class="tb" aria-label="Автоформат"><svg class="icon"><use href="#i-wand"/></svg></button>
          <button class="tb" aria-label="Свойства таблицы"><svg class="icon"><use href="#i-prop"/></svg></button>
          <i class="sep"></i>
          <button class="tb" aria-label="Сортировка"><svg class="icon"><use href="#i-sort"/></svg></button>
          <i class="sep"></i>
          <button class="tb" aria-label="Сумма"><svg class="icon"><use href="#i-sum"/></svg></button>
        </div>
      </div>
    </aside>
  </div>

  <div class="scroll">
    <button class="scroll-up" aria-label="Вверх"></button>
    <div class="thumb"></div>
  </div>
</main>
</body>
</html>
```
FILE: styles.css
```css
* { box-sizing: border-box; }

body {
  margin: 0;
  height: 100vh;
  display: flex;
  flex-direction: column;
  overflow: hidden;
  background: #d3daed;
  color: #000;
  font: 12px/16px Roboto, "Open Sans", sans-serif;
}

button, input, select { font: inherit; color: inherit; margin: 0; padding: 0; border: 0; background: none; }
button { display: flex; align-items: center; justify-content: center; flex: none; }

.sprite { position: absolute; width: 0; height: 0; }
.tiny { font-family: "Open Sans", sans-serif; font-weight: 700; }
.icon { width: 16px; height: 16px; flex: none; display: block; }
.icon.wide { width: 18px; }

/* Title bar */
.titlebar {
  flex: none;
  display: flex;
  align-items: center;
  height: 22px;
  padding: 0 2px;
  border-top: 1px solid #35363c;
  background: linear-gradient(#97b2d2, #b7cfe8);
}
.title { flex: 1; margin: 0; padding-left: 9px; font-size: 12px; font-weight: 400; }
.win-buttons { display: flex; gap: 2px; align-self: flex-start; padding-top: 1px; }
.win {
  width: 31px;
  height: 17px;
  border: 1px solid #5c6f88;
  border-radius: 2px;
  box-shadow: inset 0 0 0 1px #dbe7f4;
  background: linear-gradient(#c8d9ec 45%, #9cb5d2 50%, #b4cbe4);
}
.win svg { width: 14px; height: 14px; }
.win-close {
  border-color: #5a1822;
  box-shadow: inset 0 0 0 1px #e8aca0;
  background: linear-gradient(#dd9382 45%, #c04430 50%, #cf6a52);
}

/* Menu */
.menubar {
  flex: none;
  display: flex;
  gap: 12px;
  height: 27px;
  padding: 6px 6px 0;
  border-bottom: 1px solid #bcbcc0;
  background: linear-gradient(#fff, #e6ebf5 9px, #d3daed 9px);
}
.menubar a { color: #000; text-decoration: none; }

/* Toolbars */
.toolbar-row { flex: none; display: flex; height: 31px; border-top: 1px solid #fff; border-bottom: 1px solid #bcbcc0; }
.toolbar { display: flex; align-items: center; padding-left: 4px; border-right: 1px solid #c4c6cc; }
.format-row { background: linear-gradient(#d3daed 55%, #e6ebf6); border-bottom: 0; }
.grip {
  width: 2px;
  height: 20px;
  margin-right: 5px;
  background: repeating-linear-gradient(#9a9da6 0 2px, #fff 2px 3px, transparent 3px 4px);
}
.tb { width: 25px; height: 25px; }
.tb.on { border: 1px solid #61656e; border-radius: 3px; background: #c9cdda; box-shadow: inset 0 0 2px #7b8090; }
.sep { width: 8px; height: 16px; flex: none; background: linear-gradient(90deg, transparent 4px, #c0c2c8 4px 5px, transparent 5px); }
.drop { width: 11px; height: 25px; }
.drop::before, .combo-btn::before {
  content: "";
  border: solid transparent;
  border-width: 4px 4px 0;
  border-top-color: #000;
}
.drop::before { border-width: 3px 3px 0; }
.drop.dim::before { border-top-color: #a8abb4; }
.more {
  width: 10px;
  height: 26px;
  margin: 0 1px 0 7px;
  align-items: flex-end;
  padding-bottom: 4px;
  background: linear-gradient(#dcdcdc, #a0a0a0);
}
.more::before { content: ""; border: solid transparent; border-width: 3px 3px 0; border-top-color: #000; }

.combo {
  display: flex;
  position: relative;
  height: 23px;
  margin-right: 8px;
  border: 1px solid #9c9da2;
  background: #fff;
}
.combo select, .combo input { flex: 1; min-width: 0; padding-left: 3px; appearance: none; outline: 0; }
.combo input::placeholder { color: #8a8a8a; opacity: 1; }
.combo-btn {
  position: absolute;
  right: 1px;
  top: 1px;
  bottom: 1px;
  width: 16px;
  display: flex;
  align-items: center;
  justify-content: center;
  border: 1px solid #77787c;
  background: linear-gradient(#f6f6f6, #dcdcdc);
  pointer-events: none;
}
.combo.style { width: 141px; margin-left: 9px; }
.combo.face { width: 158px; }
.combo.size { width: 63px; }
.combo.find { width: 99px; margin: 0 1px 0 2px; }
.letter { font: 700 16px/20px "Liberation Serif", serif; }
.italic { font-style: italic; }
.under { text-decoration: underline; }

/* Work area */
.workspace {
  flex: 1;
  min-height: 0;
  display: grid;
  grid-template: 26px minmax(0, 1fr) / 27px minmax(0, 1fr) 18px;
  border-top: 2px solid #858585;
  border-left: 1px solid #858585;
  margin-right: 1px;
  background: #efefef;
}
.corner { padding: 3px 0 0 4px; }
.tab-kind { width: 18px; height: 18px; border: 1px solid #9b9b9b; background: #f4f4f4; }
.tab-kind::before { content: ""; width: 7px; height: 6px; border: solid #000; border-width: 0 0 2px 2px; }
.hruler { width: 100%; height: 25px; }
.vruler { grid-area: 2 / 1; width: 18px; height: 100%; margin: 1px 0 0 4px; }
.ruler-num { font: 12px "Noto Sans", sans-serif; text-anchor: middle; fill: #111; }

.canvas {
  grid-area: 2 / 2;
  position: relative;
  overflow: hidden;
  border-top: 1px solid #000;
  border-left: 1px solid #000;
  box-shadow: 0 -1px #8a8a8a;
  background: #ababab;
}
.page {
  display: flow-root;
  height: 100%;
  margin: 0 88px 0 90px;
  padding: 0 76px;
  border-left: 1px solid #000;
  border-right: 3px solid #000;
  background: #fff;
  font: 16px/18px "Liberation Serif", serif;
}

.ringed {
  width: 100%;
  margin-top: -29px;
  table-layout: fixed;
  border-collapse: separate;
  border-spacing: 3px;
  border: 4px solid #00f;
}
.ringed .c1 { width: 157px; }
.ringed .c2 { width: 158px; }
.ringed td {
  position: relative;
  height: 30px;
  padding: 0 2px;
  border: solid #00f;
  border-width: 4px 4px 1px 1px;
}
.ringed tr:nth-child(3) td { height: 29px; }
.ringed tr:first-child td { height: 26px; }
.ringed td:last-child { padding-left: 3px; border-right-width: 1px; }
.ringed td:not(:last-child)::after {
  content: "";
  position: absolute;
  right: 0;
  bottom: -4px;
  width: 1px;
  height: 3px;
  background: #bdbdbd;
}
.ringed tr:last-child td:not(:last-child)::after { bottom: -8px; height: 7px; }
.ringed td:last-child::before {
  content: "";
  position: absolute;
  right: -8px;
  top: -1px;
  width: 7px;
  height: 1px;
  background: #bdbdbd;
}

.callout {
  position: relative;
  margin: 13px -24px 0 -25px;
  padding: 9px 21px 23px 22px;
  border: 3px solid #e46c0a;
  border-radius: 14px;
}
.plain { width: 100%; table-layout: fixed; border-collapse: collapse; }
.plain tr { height: 26px; }
.plain tbody tr:nth-child(3n) { height: 25px; }
.plain th, .plain td { padding: 0 0 0 4px; border: 1px solid #bdbdbd; text-align: left; white-space: nowrap; }
.pointer { position: absolute; right: 36px; bottom: -44px; width: 34px; height: 58px; }

/* Floating table palette */
.palette {
  position: absolute;
  left: 15px;
  top: 8px;
  width: 327px;
  border: 1px solid #c4c4c4;
  outline: 1px solid #f2f2f2;
  outline-offset: -2px;
  padding: 1px;
  background: #d3daed;
}
.palette-head { display: flex; align-items: center; height: 18px; padding: 0 2px 0 3px; background: #b8b8b8; }
.palette-title { flex: 1; }
.palette-head .close { width: 20px; height: 18px; padding-left: 3px; }
.palette-head .drop { height: 18px; }
.palette-head .drop::before { border-width: 4px 4px 0; }
.palette-head svg { width: 9px; height: 9px; }
.palette-body { padding: 0 3px; border-bottom: 1px solid #b0b9d2; background: linear-gradient(#fff, #e6ebf5 9px, #d3daed 9px 40px, #e2e7f4); }
.palette-row { display: flex; align-items: center; height: 30px; }

/* Scroll bar */
.scroll {
  grid-area: 1 / 3 / 3 / 4;
  display: flex;
  flex-direction: column;
  justify-content: space-between;
  align-items: center;
  border-left: 1px solid #dcdcdc;
  background: linear-gradient(90deg, #e6e6e6, #f2f2f2);
}
.scroll-up { width: 17px; height: 18px; }
.scroll-up::before { content: ""; border: solid transparent; border-width: 0 4px 4px; border-bottom-color: #444; }
.thumb {
  width: 15px;
  height: 38px;
  border: 1px solid #8f8f94;
  border-bottom: 0;
  border-radius: 2px 2px 0 0;
  background:
    repeating-linear-gradient(#555 0 1px, transparent 1px 3px) center 25px / 7px 9px no-repeat,
    linear-gradient(90deg, #f4f4f4, #d0d0d4);
}
```
